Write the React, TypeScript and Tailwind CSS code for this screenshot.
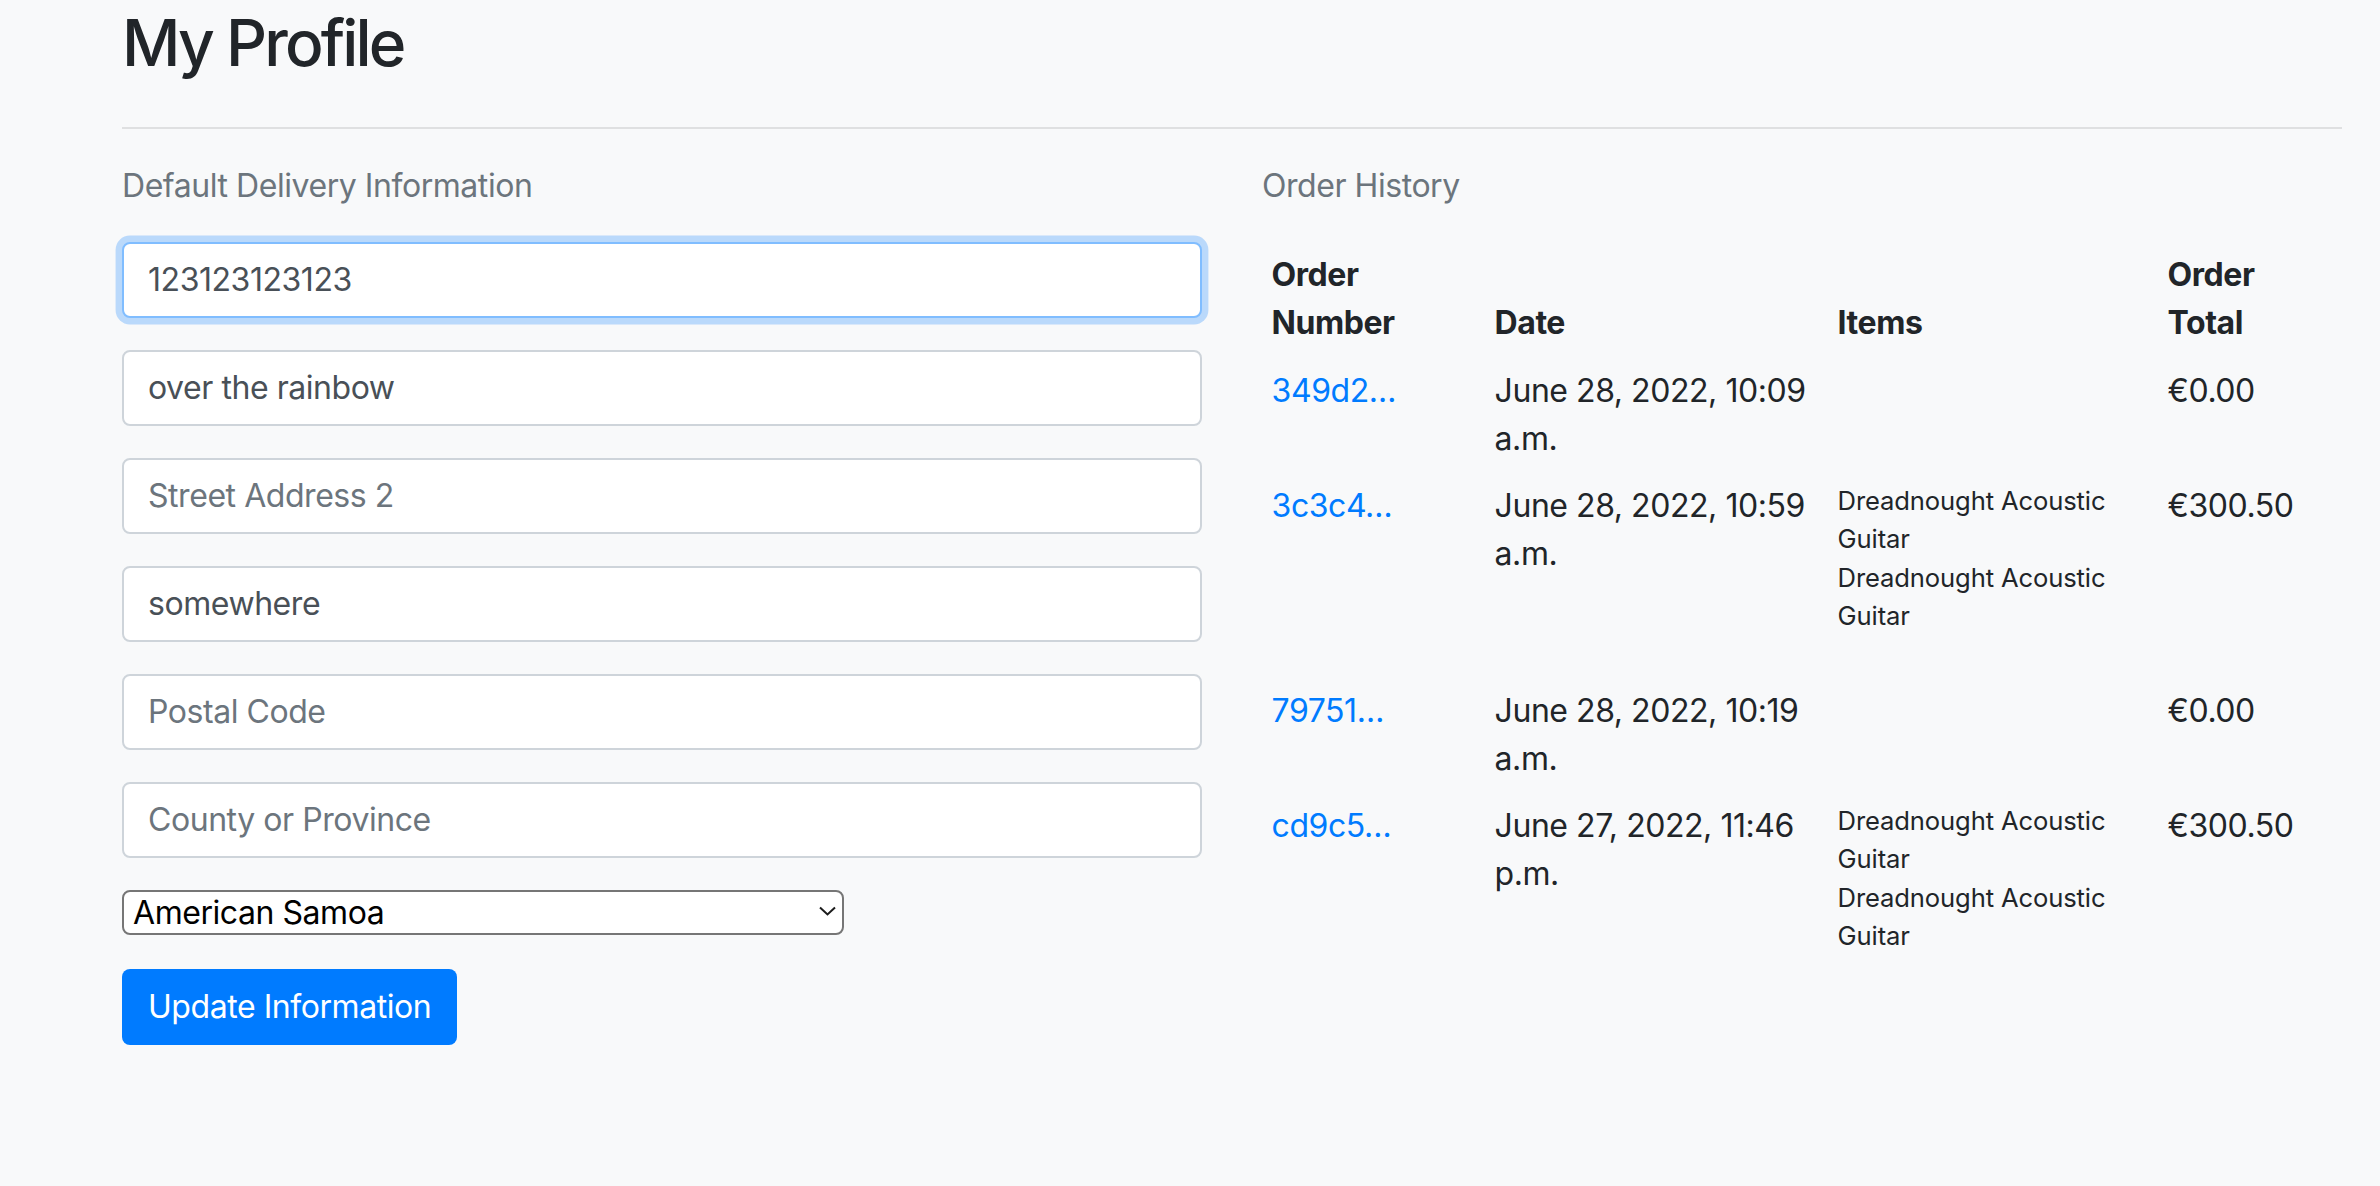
import React from 'react';

const orders = [
  { id: '349d2…', date: 'June 28, 2022, 10:09 a.m.', items: [] as string[], total: '€0.00' },
  { id: '3c3c4…', date: 'June 28, 2022, 10:59 a.m.', items: ['Dreadnought Acoustic Guitar', 'Dreadnought Acoustic Guitar'], total: '€300.50' },
  { id: '79751…', date: 'June 28, 2022, 10:19 a.m.', items: [] as string[], total: '€0.00' },
  { id: 'cd9c5…', date: 'June 27, 2022, 11:46 p.m.', items: ['Dreadnought Acoustic Guitar', 'Dreadnought Acoustic Guitar'], total: '€300.50' },
];

const fields = [
  { value: 'over the rainbow', placeholder: 'Street Address 1' },
  { value: '', placeholder: 'Street Address 2' },
  { value: 'somewhere', placeholder: 'Town or City' },
  { value: '', placeholder: 'Postal Code' },
  { value: '', placeholder: 'County or Province' },
];

export default function App() {
  return (
    <div className="min-h-screen bg-[#f8f9fa] pl-[122px] pr-[38px] pt-[5px] font-['Inter',sans-serif] tracking-[-0.028em] text-[#212529]">
      <h2 className="text-[64px] font-medium leading-[1.2] tracking-[-0.045em]">My Profile</h2>
      <hr className="mt-[45px] border-t-2 border-[#dfe0e1]" />

      <div className="mt-[33px] grid grid-cols-2 gap-x-[60px]">
        {/* Delivery info form */}
        <div>
          <p className="mb-8 text-[32px] leading-[48px] text-[#6c757d]">Default Delivery Information</p>
          <form className="flex flex-col gap-8">
            <input
              readOnly
              defaultValue="123123123123"
              placeholder="Phone Number"
              className="h-[76px] w-full rounded-[8px] border-2 border-[#80bdff] bg-white px-6 text-[32px] text-[#495057] shadow-[0_0_0_6.4px_rgba(0,123,255,0.25)] outline-none"
            />
            {fields.map((f) => (
              <input
                key={f.placeholder}
                readOnly
                defaultValue={f.value}
                placeholder={f.placeholder}
                className="h-[76px] w-full rounded-[8px] border-2 border-[#ced4da] bg-white px-6 text-[32px] text-[#495057] outline-none placeholder:text-[#6c757d]"
              />
            ))}
            <div className="relative w-[722px]">
              <select
                defaultValue="AS"
                className="h-[45px] w-full appearance-none rounded-[8px] border-2 border-[#767676] bg-white pl-[9px] text-[32px] leading-[41px] text-black outline-none"
              >
                <option value="AS">American Samoa</option>
              </select>
              <svg
                className="pointer-events-none absolute right-[8px] top-[16px]"
                width="17"
                height="10"
                viewBox="0 0 17 10"
                fill="none"
              >
                <path d="M1 1.5L8.5 8.5L16 1.5" stroke="#1c1c1c" strokeWidth="2" />
              </svg>
            </div>
            <button
              type="button"
              className="mt-[2px] h-[76px] w-fit rounded-[8px] bg-[#007bff] px-[26px] text-[32px] text-white"
            >
              Update Information
            </button>
          </form>
        </div>

        {/* Order history */}
        <div>
          <p className="mb-8 text-[32px] leading-[48px] text-[#6c757d]">Order History</p>
          <table className="w-full table-fixed text-[32px] leading-[48px]">
            <thead>
              <tr>
                <th className="w-[223px] p-[9.6px] text-left align-bottom font-bold">
                  <span className="inline-block w-min">Order Number</span>
                </th>
                <th className="w-[343px] p-[9.6px] text-left align-bottom font-bold">Date</th>
                <th className="w-[330px] p-[9.6px] text-left align-bottom font-bold">Items</th>
                <th className="p-[9.6px] text-left align-bottom font-bold">
                  <span className="inline-block w-min">Order Total</span>
                </th>
              </tr>
            </thead>
            <tbody>
              {orders.map((o) => (
                <tr key={o.id}>
                  <td className="p-[9.6px] align-top">
                    <a href="#" className="text-[#007bff]">{o.id}</a>
                  </td>
                  <td className="p-[9.6px] align-top">{o.date}</td>
                  <td className="p-[9.6px] align-top">
                    {o.items.length > 0 && (
                      <div className="mb-8">
                        {o.items.map((item, i) => (
                          <p key={i} className="text-[25.6px] leading-[38.4px] tracking-[-0.005em]">{item}</p>
                        ))}
                      </div>
                    )}
                  </td>
                  <td className="p-[9.6px] align-top">{o.total}</td>
                </tr>
              ))}
            </tbody>
          </table>
        </div>
      </div>
    </div>
  );
}
